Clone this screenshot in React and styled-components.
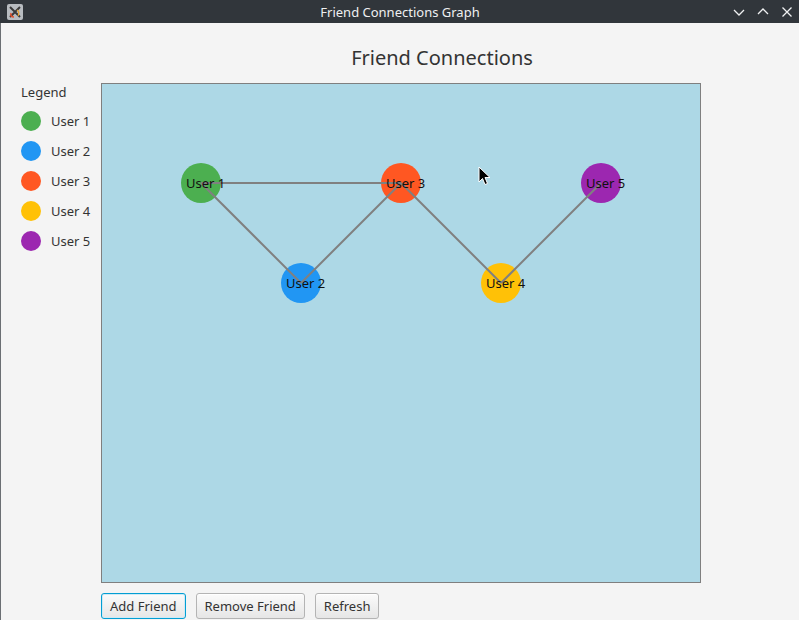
import React from "react";
import styled, { createGlobalStyle } from "styled-components";

const GlobalStyle = createGlobalStyle`
  html, body {
    margin: 0;
    padding: 0;
    background: #f4f4f4;
  }
  body {
    font-family: "Noto Sans", "DejaVu Sans", sans-serif;
  }
`;

const users = [
  { id: 1, name: "User 1", color: "#4caf50", x: 100, y: 100 },
  { id: 2, name: "User 2", color: "#2196f3", x: 200, y: 200 },
  { id: 3, name: "User 3", color: "#ff5722", x: 300, y: 100 },
  { id: 4, name: "User 4", color: "#ffc107", x: 400, y: 200 },
  { id: 5, name: "User 5", color: "#9c27b0", x: 500, y: 100 },
];

const friendships = [
  [1, 3],
  [1, 2],
  [2, 3],
  [3, 4],
  [4, 5],
];

const Window = styled.div`
  width: 799px;
  height: 620px;
  display: flex;
  flex-direction: column;
  overflow: hidden;
`;

const TitleBar = styled.div`
  height: 23px;
  flex-shrink: 0;
  background: #31363b;
  color: #eff0f1;
  display: grid;
  grid-template-columns: 1fr auto 1fr;
  align-items: center;
  font-size: 13px;
`;

const AppIcon = styled.div`
  width: 16px;
  height: 16px;
  margin-left: 7px;
  background: #b8bcc0;
  border-radius: 2px;
  display: flex;
  align-items: center;
  justify-content: center;
`;

const TitleText = styled.div`
  text-align: center;
  padding-left: 1px;
`;

const Controls = styled.div`
  display: flex;
  gap: 12px;
  margin-right: 6px;
  align-items: center;
  justify-self: end;
`;

const Body = styled.div`
  flex: 1;
  border-left: 1px solid #6b6f73;
  display: flex;
  flex-direction: column;
`;

const Heading = styled.h1`
  margin: 0;
  height: 60px;
  padding: 22px 0 0 84px;
  box-sizing: border-box;
  text-align: center;
  font-weight: 400;
  font-size: 20px;
  line-height: 26px;
  color: #333;
`;

const Main = styled.div`
  display: flex;
`;

const Legend = styled.div`
  width: 100px;
  padding-left: 20px;
  box-sizing: border-box;
  display: flex;
  flex-direction: column;
  gap: 10px;
`;

const LegendTitle = styled.div`
  font-size: 13px;
  line-height: 18px;
  color: #333;
`;

const LegendItem = styled.div`
  display: flex;
  align-items: center;
  gap: 10px;
  height: 20px;
  line-height: 18px;
  font-size: 13px;
  color: #333;
`;

const Swatch = styled.span`
  width: 20px;
  height: 20px;
  border-radius: 50%;
  background: ${(props) => props.color};
`;

const Canvas = styled.div`
  width: 598px;
  height: 498px;
  border: 1px solid #7f7f7f;
  background: #add8e6;
  position: relative;
`;

const Graph = styled.svg`
  display: block;
  font-family: "Noto Sans", "DejaVu Sans", sans-serif;
  font-size: 13px;
`;

const Cursor = styled.svg`
  position: absolute;
  left: 376px;
  top: 82px;
`;

const ButtonRow = styled.div`
  display: flex;
  gap: 10px;
  padding: 10px 0 0 100px;
`;

const Button = styled.button`
  height: 26px;
  padding: 0 8px;
  font-family: "Noto Sans", "DejaVu Sans", sans-serif;
  font-size: 13px;
  color: #333;
  border-radius: 3px;
  background: linear-gradient(#fbfbfb, #e6e6e6);
  border: 1px solid ${(props) => (props.focused ? "#039ed3" : "#b4b4b4")};
  box-shadow: ${(props) =>
    props.focused ? "inset 0 0 0 1px #cfeaf5" : "inset 0 1px 0 #ffffff"};
`;

const App = () => {
  const byId = (id) => users.find((u) => u.id === id);
  return (
    <>
      <GlobalStyle />
      <Window>
        <TitleBar>
          <AppIcon>
            <svg width="14" height="14" viewBox="0 0 14 14">
              <path d="M2 2 L12 12 M12 2 L2 12" stroke="#3a3a3a" strokeWidth="2" />
              <path d="M3 8 Q2 12 6 12" stroke="#e0502a" strokeWidth="1.5" fill="none" />
              <path d="M9 5 Q12 7 10 11" stroke="#e8a030" strokeWidth="1.2" fill="none" />
            </svg>
          </AppIcon>
          <TitleText>Friend Connections Graph</TitleText>
          <Controls>
            <svg width="12" height="12" viewBox="0 0 12 12">
              <path d="M1 4 L6 9 L11 4" stroke="#eff0f1" strokeWidth="1.3" fill="none" />
            </svg>
            <svg width="12" height="12" viewBox="0 0 12 12">
              <path d="M1 8 L6 3 L11 8" stroke="#eff0f1" strokeWidth="1.3" fill="none" />
            </svg>
            <svg width="12" height="12" viewBox="0 0 12 12">
              <path d="M1.5 1.5 L10.5 10.5 M10.5 1.5 L1.5 10.5" stroke="#eff0f1" strokeWidth="1.3" />
            </svg>
          </Controls>
        </TitleBar>
        <Body>
          <Heading>Friend Connections</Heading>
          <Main>
            <Legend>
              <LegendTitle>Legend</LegendTitle>
              {users.map((u) => (
                <LegendItem key={u.id}>
                  <Swatch color={u.color} />
                  {u.name}
                </LegendItem>
              ))}
            </Legend>
            <Canvas>
              <Graph width="598" height="498" viewBox="1 1 598 498">
                {users.map((u) => (
                  <circle key={u.id} cx={u.x} cy={u.y} r="20" fill={u.color} />
                ))}
                {friendships.map(([a, b]) => (
                  <line
                    key={`${a}-${b}`}
                    x1={byId(a).x}
                    y1={byId(a).y}
                    x2={byId(b).x}
                    y2={byId(b).y}
                    stroke="#808080"
                    strokeWidth="2"
                  />
                ))}
                {users.map((u) => (
                  <text key={u.id} x={u.x - 15} y={u.y + 5} fill="#111">
                    {u.name}
                  </text>
                ))}
              </Graph>
              <Cursor width="14" height="22" viewBox="0 0 14 22">
                <path
                  d="M1 1 L1 16 L4.5 12.5 L7 18.5 L9.5 17.5 L7 11.5 L12 11.5 Z"
                  fill="#000"
                  stroke="#fff"
                  strokeWidth="1"
                />
              </Cursor>
            </Canvas>
          </Main>
          <ButtonRow>
            <Button focused>Add Friend</Button>
            <Button>Remove Friend</Button>
            <Button>Refresh</Button>
          </ButtonRow>
        </Body>
      </Window>
    </>
  );
};

export default App;
